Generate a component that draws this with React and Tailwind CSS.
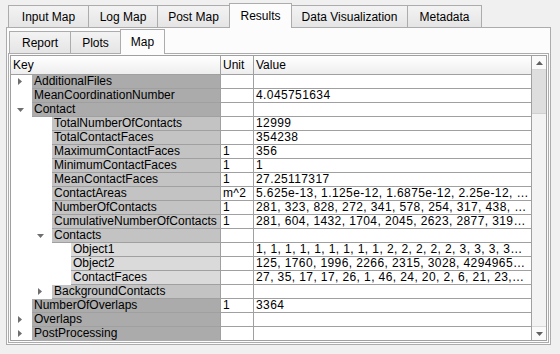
import React from 'react';

const topTabs = [
  { label: 'Input Map', w: 'w-[81px]' },
  { label: 'Log Map', w: 'w-[70px]' },
  { label: 'Post Map', w: 'w-[73px]' },
  { label: 'Results', w: 'w-[63px]', active: true },
  { label: 'Data Visualization', w: 'w-[117px]' },
  { label: 'Metadata', w: 'w-[75px]' },
];

const subTabs = [
  { label: 'Report', w: 'w-[62px]' },
  { label: 'Plots', w: 'w-[51px]' },
  { label: 'Map', w: 'w-[45px]', active: true },
];

const rows = [
  { key: 'AdditionalFiles', level: 1, arrow: 'right' },
  { key: 'MeanCoordinationNumber', level: 1, value: '4.045751634' },
  { key: 'Contact', level: 1, arrow: 'down' },
  { key: 'TotalNumberOfContacts', level: 2, value: '12999' },
  { key: 'TotalContactFaces', level: 2, value: '354238' },
  { key: 'MaximumContactFaces', level: 2, unit: '1', value: '356' },
  { key: 'MinimumContactFaces', level: 2, unit: '1', value: '1' },
  { key: 'MeanContactFaces', level: 2, unit: '1', value: '27.25117317' },
  { key: 'ContactAreas', level: 2, unit: 'm^2', value: '5.625e-13, 1.125e-12, 1.6875e-12, 2.25e-12, …' },
  { key: 'NumberOfContacts', level: 2, unit: '1', value: '281, 323, 828, 272, 341, 578, 254, 317, 438, …' },
  { key: 'CumulativeNumberOfContacts', level: 2, unit: '1', value: '281, 604, 1432, 1704, 2045, 2623, 2877, 319…' },
  { key: 'Contacts', level: 2, arrow: 'down' },
  { key: 'Object1', level: 3, value: '1, 1, 1, 1, 1, 1, 1, 1, 1, 2, 2, 2, 2, 2, 3, 3, 3, 3…' },
  { key: 'Object2', level: 3, value: '125, 1760, 1996, 2266, 2315, 3028, 4294965…' },
  { key: 'ContactFaces', level: 3, value: '27, 35, 17, 17, 26, 1, 46, 24, 20, 2, 6, 21, 23,…' },
  { key: 'BackgroundContacts', level: 2, arrow: 'right' },
  { key: 'NumberOfOverlaps', level: 1, unit: '1', value: '3364' },
  { key: 'Overlaps', level: 1, arrow: 'right' },
  { key: 'PostProcessing', level: 1, arrow: 'right' },
];

const indent = { 1: 'w-[21px]', 2: 'w-[41px]', 3: 'w-[60px]' };
const arrowPad = { 1: 'pl-[7px]', 2: 'pl-[27px]', 3: 'pl-[46px]' };
const shade = { 1: 'bg-[#ababab]', 2: 'bg-[#c3c3c3]', 3: 'bg-[#dadada]' };

const Arrow = ({ dir }) =>
  dir === 'down' ? (
    <svg width="7" height="4" viewBox="0 0 7 4" className="-ml-[1px]">
      <path d="M0 0H7L3.5 4Z" fill="#6e6e6e" />
    </svg>
  ) : (
    <svg width="4" height="7" viewBox="0 0 4 7">
      <path d="M0 0V7L4 3.5Z" fill="#6e6e6e" />
    </svg>
  );

const TabBar = ({ tabs, first }) => (
  <div className={`flex h-[24px] items-end ${first}`}>
    {tabs.map((t, i) =>
      t.active ? (
        <div
          key={t.label}
          className={`${t.w} relative z-10 -mb-[1px] -ml-[1px] flex h-[25px] items-center justify-center border border-b-0 border-[#acacac] bg-[#fcfcfc] pb-[1px]`}
        >
          {t.label}
        </div>
      ) : (
        <div
          key={t.label}
          className={`${t.w} ${i > 0 ? '-ml-[1px]' : ''} flex h-[22px] items-center justify-center border border-b-0 border-[#acacac] bg-linear-to-b from-[#f3f3f3] to-[#e5e5e5]`}
        >
          {t.label}
        </div>
      )
    )}
  </div>
);

const Row = ({ row, last }) => (
  <div className="flex h-[14px] leading-[13px]">
    <div className="flex w-[210px] border-r border-[#a0a0a0]">
      <div className={`${indent[row.level]} ${arrowPad[row.level]} flex shrink-0 items-center pb-[1px]`}>
        {row.arrow && <Arrow dir={row.arrow} />}
      </div>
      <div className={`${shade[row.level]} flex-1 whitespace-nowrap pl-[2px] ${last ? '' : 'border-b border-[#a0a0a0]'}`}>
        {row.key}
      </div>
    </div>
    <div className={`w-[33px] border-r pl-[2px] tracking-[0.3px] border-[#a0a0a0] ${last ? '' : 'border-b'}`}>
      {row.unit}
    </div>
    <div className={`flex-1 overflow-hidden whitespace-nowrap pl-[2px] tracking-[0.4px] border-[#a0a0a0] ${last ? '' : 'border-b'}`}>
      {row.value}
    </div>
  </div>
);

export default function App() {
  return (
    <div className="h-[354px] w-[560px] overflow-hidden bg-[#f0f0f0] pl-[6px] pt-[3px] font-['Liberation_Sans',Arial,sans-serif] text-[12px] text-black">
      <div className="w-[545px]">
        <TabBar tabs={topTabs} first="pl-[2px]" />
        <div className="h-[318px] border border-[#acacac] bg-[#fcfcfc] p-[1px]">
          <TabBar tabs={subTabs} first="pl-[1px]" />
          <div className="h-[290px] border border-[#acacac] bg-[#fcfcfc] p-[1px]">
            <div className="flex h-[286px] border border-[#a0a0a0] bg-white">
              <div className="flex-1">
                <div className="flex h-[19px] border-b border-[#a0a0a0] bg-linear-to-b from-white to-[#eeeeee] leading-[18px]">
                  <div className="w-[210px] border-r border-[#a0a0a0] pl-[2px]">Key</div>
                  <div className="w-[33px] border-r border-[#a0a0a0] pl-[2px]">Unit</div>
                  <div className="flex-1 pl-[2px]">Value</div>
                </div>
                {rows.map((r, i) => (
                  <Row key={r.key} row={r} last={i === rows.length - 1} />
                ))}
              </div>
              <div className="flex w-[15px] flex-col border-l border-[#a0a0a0] bg-[#f3f3f3]">
                <div className="flex h-[14px] items-center justify-center border-b border-[#d8d8d8] bg-[#fafafa]">
                  <svg width="7" height="4" viewBox="0 0 7 4">
                    <path d="M0 4H7L3.5 0Z" fill="#606060" />
                  </svg>
                </div>
                <div className="h-[44px] border-b border-[#d0d0d0] bg-[#dedede]" />
                <div className="flex-1" />
                <div className="flex h-[14px] items-center justify-center border-t border-[#d8d8d8] bg-[#fafafa]">
                  <svg width="7" height="4" viewBox="0 0 7 4">
                    <path d="M0 0H7L3.5 4Z" fill="#606060" />
                  </svg>
                </div>
              </div>
            </div>
          </div>
        </div>
      </div>
    </div>
  );
}
